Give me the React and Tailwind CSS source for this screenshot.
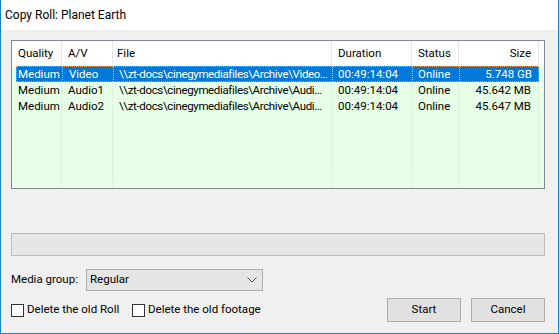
import React from 'react';

const rows = [
  { q: "Medium", av: "Video", file: "\\\\zt-docs\\cinegymediafiles\\Archive\\Video…", dur: "00:49:14:04", st: "Online", size: "5.748 GB", sel: true },
  { q: "Medium", av: "Audio1", file: "\\\\zt-docs\\cinegymediafiles\\Archive\\Audi…", dur: "00:49:14:04", st: "Online", size: "45.642 MB" },
  { q: "Medium", av: "Audio2", file: "\\\\zt-docs\\cinegymediafiles\\Archive\\Audi…", dur: "00:49:14:04", st: "Online", size: "45.647 MB" },
];

const cols = "grid grid-cols-[50px_51px_219px_80px_47px_80px_1fr]";

const Cell = ({ children, right, line, tight }) => (
  <div className={`border-r ${line} whitespace-nowrap overflow-hidden ${right ? "text-right pr-[7px]" : "pl-[6px] pr-[1px]"} ${tight ? "tracking-[-0.35px]" : ""}`}>
    {children}
  </div>
);

const selCell = "bg-[#0078d7] text-white border-y border-l border-dotted border-[#e8a060] border-l-[#a8cdec] whitespace-nowrap overflow-hidden";

function Row({ r }) {
  if (r.sel) {
    return (
      <div className={`${cols} h-[16px] leading-[14px]`}>
        <div className="pl-[4px] overflow-hidden">
          <div className="bg-[#0078d7] text-white h-full border-l border-y border-dotted border-[#e8a060] pl-[1px] whitespace-nowrap">{r.q}</div>
        </div>
        <div className={`${selCell} pl-[6px]`}>{r.av}</div>
        <div className={`${selCell} pl-[5px] tracking-[-0.35px]`}>{r.file}</div>
        <div className={`${selCell} pl-[5px]`}>{r.dur}</div>
        <div className={`${selCell} pl-[5px]`}>{r.st}</div>
        <div className={`${selCell} border-r pr-[6px] text-right`}>{r.size}</div>
        <div />
      </div>
    );
  }
  return (
    <div className={`${cols} h-[16px] leading-[16px]`}>
      <Cell line="border-[#dcf0dc]">{r.q}</Cell>
      <Cell line="border-[#dcf0dc]">{r.av}</Cell>
      <Cell line="border-[#dcf0dc]" tight>{r.file}</Cell>
      <Cell line="border-[#dcf0dc]">{r.dur}</Cell>
      <Cell line="border-[#dcf0dc]">{r.st}</Cell>
      <Cell line="border-[#dcf0dc]" right>{r.size}</Cell>
      <div />
    </div>
  );
}

export default function App() {
  return (
    <div className="w-[559px] h-[334px] bg-[#f0f0f0] border-x border-b border-[#1883d7] font-['Roboto',sans-serif] text-[11.5px] text-black flex flex-col overflow-hidden">
      <div className="h-[30px] bg-white flex items-center pl-[4px] text-[12px] shrink-0">Copy Roll: Planet Earth</div>

      <div className="flex flex-col pl-[10px] pr-[13px] pt-[10px]">
        {/* list view */}
        <div className="h-[149px] border border-[#828790] bg-[#e6ffe6] flex flex-col">
          <div className={`${cols} h-[25px] bg-white items-stretch leading-[25px]`}>
            <Cell line="border-[#e5e5e5]">Quality</Cell>
            <Cell line="border-[#e5e5e5]">A/V</Cell>
            <div className="border-r border-[#e5e5e5] pl-[4px]">File</div>
            <Cell line="border-[#e5e5e5]">Duration</Cell>
            <Cell line="border-[#e5e5e5]">Status</Cell>
            <Cell line="border-[#e5e5e5]" right>Size</Cell>
            <div />
          </div>
          {rows.map((r, i) => <Row key={i} r={r} />)}
          <div className={`${cols} flex-1`}>
            <div className="border-r border-[#dcf0dc]" />
            <div className="border-r border-[#dcf0dc]" />
            <div className="border-r border-[#dcf0dc]" />
            <div className="border-r border-[#dcf0dc]" />
            <div className="border-r border-[#dcf0dc]" />
            <div className="border-r border-[#dcf0dc]" />
            <div />
          </div>
        </div>

        {/* progress */}
        <div className="mt-[44px] h-[23px] bg-[#e6e6e6] border border-[#bcbcbc]" />

        {/* media group */}
        <div className="mt-[13px] flex items-center h-[22px]">
          <span className="w-[75px] whitespace-nowrap">Media group:</span>
          <div className="w-[177px] h-[22px] bg-[#e5e5e5] border border-[#acacac] flex items-center justify-between pl-[3px] pr-[4px]">
            <span>Regular</span>
            <svg width="10" height="6" viewBox="0 0 10 6" className="mr-[1px]">
              <polyline points="0.5,0.5 5,5 9.5,0.5" fill="none" stroke="#555" strokeWidth="1" />
            </svg>
          </div>
        </div>

        {/* bottom */}
        <div className="mt-[7px] flex items-center justify-between">
          <div className="flex items-center">
            <label className="flex items-center w-[121px]">
              <span className="w-[13px] h-[13px] bg-white border border-[#333]" />
              <span className="ml-[3px] whitespace-nowrap">Delete the old Roll</span>
            </label>
            <label className="flex items-center">
              <span className="w-[13px] h-[13px] bg-white border border-[#333]" />
              <span className="ml-[3px] whitespace-nowrap">Delete the old footage</span>
            </label>
          </div>
          <div className="flex gap-[10px]">
            <button className="w-[74px] h-[24px] bg-[#e1e1e1] border border-[#adadad]">Start</button>
            <button className="w-[74px] h-[24px] bg-[#e1e1e1] border border-[#adadad]">Cancel</button>
          </div>
        </div>
      </div>
    </div>
  );
}
